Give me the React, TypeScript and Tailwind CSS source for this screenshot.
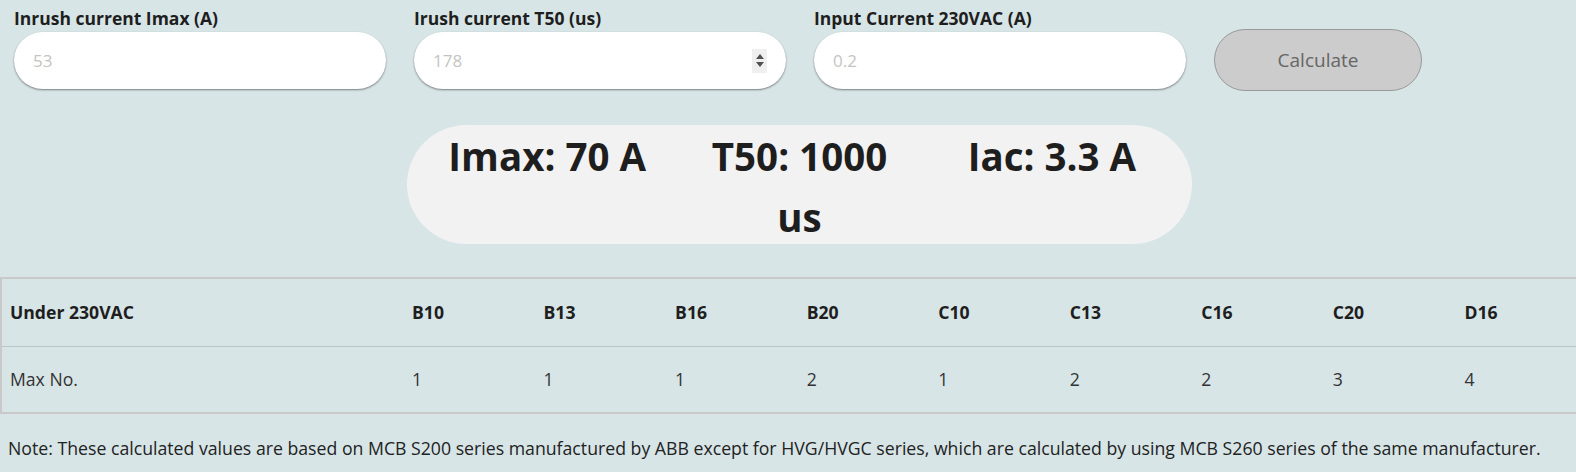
const font = { fontFamily: '"Open Sans", "Noto Sans", sans-serif' };

const fields = [
  { label: "Inrush current Imax (A)", placeholder: "53", spin: false },
  { label: "Irush current T50 (us)", placeholder: "178", spin: true },
  { label: "Input Current 230VAC (A)", placeholder: "0.2", spin: false },
];

const cols = ["B10", "B13", "B16", "B20", "C10", "C13", "C16", "C20", "D16"];
const counts = ["1", "1", "1", "2", "1", "2", "2", "3", "4"];

const Spinner = () => (
  <div className="flex h-[24px] w-[15px] flex-col items-center justify-center gap-[3px] bg-[#efefef]">
    <svg width="8" height="5" viewBox="0 0 8 5">
      <path d="M0 5 L4 0 L8 5 Z" fill="#505050" />
    </svg>
    <svg width="8" height="5" viewBox="0 0 8 5">
      <path d="M0 0 L4 5 L8 0 Z" fill="#505050" />
    </svg>
  </div>
);

export default function App() {
  return (
    <div className="min-h-screen overflow-hidden bg-[#d7e5e7] text-[#1e1e1e]" style={font}>
      {/* Inputs */}
      <div className="flex items-start gap-[28px] pl-[14px] pt-[7px]">
        {fields.map((f) => (
          <div key={f.label} className="flex flex-col">
            <label className="mb-[3px] h-[22px] text-[17.5px] leading-[22px] font-bold">{f.label}</label>
            <div className="flex h-[57px] w-[372px] items-center justify-between rounded-full bg-white pl-[19px] pr-[19px] shadow-[0_1px_2px_rgba(0,0,0,0.45)]">
              <span className="text-[17px] text-[#c4c4c4]">{f.placeholder}</span>
              {f.spin && <Spinner />}
            </div>
          </div>
        ))}
        <button className="mt-[22px] h-[62px] w-[208px] rounded-full border border-[#999] bg-[#cccccc] text-[19px] text-[#666]">
          Calculate
        </button>
      </div>

      {/* Result */}
      <div className="pl-[23px]">
        <div className="mx-auto mt-[34px] grid h-[119px] w-[785px] grid-cols-3 rounded-[60px] bg-[#f2f2f2] px-[14px] pt-[1px] text-center text-[38.5px] leading-[61px] font-bold text-[#1e1e1e]">
          <div>Imax: 70 A</div>
          <div>
            T50: 1000
            <br />
            us
          </div>
          <div>Iac: 3.3 A</div>
        </div>
      </div>

      {/* Table */}
      <table className="mt-[33px] w-[1588px] table-fixed border-collapse border-t-2 border-b-2 border-l-2 border-[#c9c9c9] text-[17.6px]">
        <colgroup>
          <col className="w-[403px]" />
          {cols.map((c) => (
            <col key={c} />
          ))}
        </colgroup>
        <thead>
          <tr className="h-[68px] border-b border-[#b8c6c8]">
            <th className="px-[8px] text-left font-bold">Under 230VAC</th>
            {cols.map((c) => (
              <th key={c} className="px-[8px] text-left font-bold">
                {c}
              </th>
            ))}
          </tr>
        </thead>
        <tbody>
          <tr className="h-[67px]">
            <td className="px-[8px] text-[#333]">Max No.</td>
            {counts.map((n, i) => (
              <td key={i} className="px-[8px] text-[#333]">
                {n}
              </td>
            ))}
          </tr>
        </tbody>
      </table>

      <p className="px-[8px] pt-[21px] text-[17.7px] text-[#222]">
        Note: These calculated values are based on MCB S200 series manufactured by ABB except for HVG/HVGC series, which are calculated by using MCB S260 series of the same manufacturer.
      </p>
    </div>
  );
}
